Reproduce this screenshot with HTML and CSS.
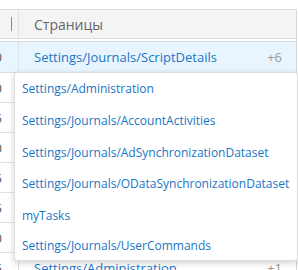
FILE: index.html
```html
<!DOCTYPE html>
<html lang="ru">

<head>
	<title>Страницы</title>
	<meta charset="utf-8"/>
	<meta name="viewport" content="width=device-width, initial-scale=1"/>

	<link rel="stylesheet" href="styles.css">
</head>

<body>
	<div id="grid">
		<div class="row head">
			<div class="cell num"><span class="grip"></span></div>
			<div class="cell page">Страницы</div>
		</div>
		<div class="row selected">
			<div class="cell num">0</div>
			<div class="cell page"><span class="link">Settings/Journals/ScriptDetails</span><span class="more">+6</span></div>
		</div>
		<div class="row"><div class="cell num">0</div><div class="cell page"></div></div>
		<div class="row"><div class="cell num">5</div><div class="cell page"></div></div>
		<div class="row"><div class="cell num">0</div><div class="cell page"></div></div>
		<div class="row"><div class="cell num">5</div><div class="cell page"></div></div>
		<div class="row"><div class="cell num">5</div><div class="cell page"></div></div>
		<div class="row"><div class="cell num">0</div><div class="cell page"></div></div>
		<div class="row">
			<div class="cell num">5</div>
			<div class="cell page"><span class="link">Settings/Administration</span><span class="more">+1</span></div>
		</div>
	</div>

	<ul id="dropdown">
		<li><a href="#">Settings/Administration</a></li>
		<li><a href="#">Settings/Journals/AccountActivities</a></li>
		<li><a href="#">Settings/Journals/AdSynchronizationDataset</a></li>
		<li><a href="#">Settings/Journals/ODataSynchronizationDataset</a></li>
		<li><a href="#">myTasks</a></li>
		<li><a href="#">Settings/Journals/UserCommands</a></li>
	</ul>
</body>
</html>
```

FILE: styles.css
```css
body {
	margin: 0;
	font-family: "Open Sans", "Liberation Sans", sans-serif;
	background: #fff;
	overflow: hidden;
}

#grid {
	margin-top: 9px;
	margin-left: -20px;
	width: 316px;
	border-top: 1px solid #ddd;
	border-right: 1px solid #d6d6d6;
}

.row {
	display: flex;
	height: 29px;
	border-bottom: 1px solid #e2e2e2;
	font-size: 13px;
}

.row.head {
	height: 28px;
	background: #f4f4f4;
	border-bottom: 1px solid #ddd;
	margin-bottom: 2px;
	font-size: 14px;
	color: #666;
}

.row.selected {
	height: 30px;
	background: #e8f5fe;
	border-top: 1px solid #d4dde4;
	border-bottom: 1px solid #d4dde4;
}

.cell {
	display: flex;
	align-items: center;
}

.num {
	width: 39px;
	flex: none;
	justify-content: flex-end;
	padding-right: 16px;
	box-sizing: border-box;
	border-right: 1px solid #e0e0e0;
	color: #555;
}

.head .num {
	padding-right: 6px;
}

.grip {
	width: 1px;
	height: 14px;
	background: #888;
}

.page {
	flex: 1;
	padding: 0 14px 0 15px;
	justify-content: space-between;
}

.link {
	color: #1a76c4;
}

.more {
	color: #999;
}

#dropdown {
	position: absolute;
	left: 14px;
	top: 72px;
	width: 282px;
	margin: 0;
	padding: 0;
	list-style: none;
	background: #fff;
	border: 1px solid #ddd;
	border-radius: 3px;
	box-shadow: 0 2px 6px rgba(0, 0, 0, 0.18);
}

#dropdown li {
	height: 31.7px;
	display: flex;
	align-items: center;
	padding-left: 7px;
}

#dropdown li:last-child {
	height: 29px;
}

#dropdown a {
	font-size: 12px;
	color: #1a76c4;
	text-decoration: none;
}
```
